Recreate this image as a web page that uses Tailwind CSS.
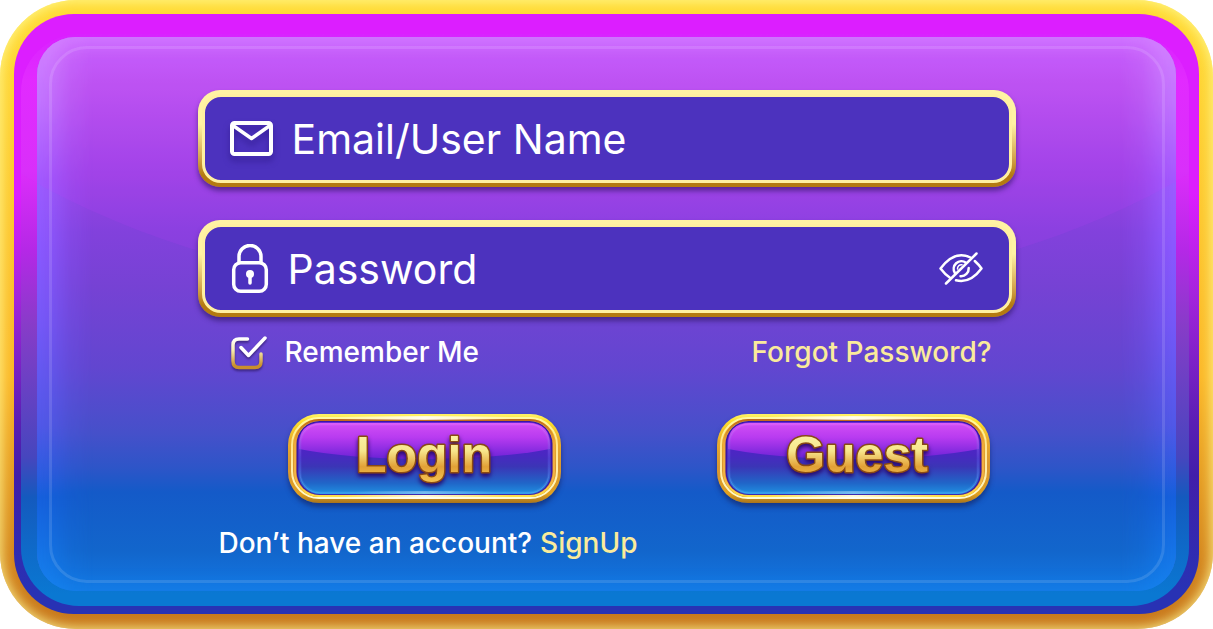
<!DOCTYPE html>
<html lang="en">
<head>
<meta charset="utf-8">
<meta name="viewport" content="width=device-width, initial-scale=1">
<title>Login</title>
<script src="https://cdn.jsdelivr.net/npm/@tailwindcss/browser@4"></script>
</head>
<body class="bg-white font-['Inter',sans-serif] text-white">

<!-- Shared gradients -->
<svg width="0" height="0" class="absolute" aria-hidden="true">
  <defs>
    <linearGradient id="gold" x1="0" y1="0" x2="0" y2="1">
      <stop offset="0" stop-color="#fff36a"/><stop offset=".08" stop-color="#fde02c"/><stop offset=".3" stop-color="#e9ac2c"/><stop offset=".6" stop-color="#d9962f"/><stop offset=".9" stop-color="#e0a020"/><stop offset="1" stop-color="#a9741c"/>
    </linearGradient>
    <linearGradient id="goldLine" x1="0" y1="0" x2="0" y2="1">
      <stop offset="0" stop-color="#fff9a0"/><stop offset=".35" stop-color="#ffe48c"/><stop offset=".75" stop-color="#fff0b0"/><stop offset="1" stop-color="#fffbd0"/>
    </linearGradient>
    <linearGradient id="goldInner" x1="0" y1="0" x2="0" y2="1">
      <stop offset="0" stop-color="#c46a18"/><stop offset=".3" stop-color="#f0a93a"/><stop offset=".8" stop-color="#f3b545"/><stop offset="1" stop-color="#ffdf45"/>
    </linearGradient>
    <linearGradient id="face" x1="0" y1="0" x2="0" y2="1">
      <stop offset="0" stop-color="#5a1fd0"/><stop offset=".45" stop-color="#4a27c2"/><stop offset=".62" stop-color="#3b35b6"/><stop offset=".85" stop-color="#2066c8"/><stop offset="1" stop-color="#2090e2"/>
    </linearGradient>
    <linearGradient id="gloss" x1="0" y1="0" x2="0" y2="1">
      <stop offset="0" stop-color="#d24ff5"/><stop offset=".4" stop-color="#b83bf0"/><stop offset="1" stop-color="#6a22d6"/>
    </linearGradient>
    <linearGradient id="rim" x1="0" y1="0" x2="0" y2="1">
      <stop offset="0" stop-color="#e86cfa"/><stop offset=".5" stop-color="#5a50e0"/><stop offset="1" stop-color="#4cb0f4"/>
    </linearGradient>
    <linearGradient id="flare" x1="0" y1="0" x2="1" y2="0">
      <stop offset=".1" stop-color="#fff" stop-opacity="0"/><stop offset=".5" stop-color="#fff" stop-opacity=".8"/><stop offset=".9" stop-color="#fff" stop-opacity="0"/>
    </linearGradient>
    <linearGradient id="caption" gradientUnits="userSpaceOnUse" x1="0" y1="20" x2="0" y2="68">
      <stop offset="0" stop-color="#fbf3a4"/><stop offset=".35" stop-color="#f7e68c"/><stop offset=".68" stop-color="#e2a136"/><stop offset="1" stop-color="#f3c250"/>
    </linearGradient>
    <linearGradient id="tick" gradientUnits="userSpaceOnUse" x1="0" y1="0" x2="0" y2="34">
      <stop offset=".1" stop-color="#fff"/><stop offset=".45" stop-color="#f8ecb0"/><stop offset=".9" stop-color="#c98f2c"/>
    </linearGradient>
    <g id="plate">
      <rect width="273" height="89" rx="31" fill="url(#gold)"/>
      <rect x="4" y="4" width="265" height="80" rx="27" fill="none" stroke="url(#goldLine)" stroke-width="2"/>
      <rect x="7" y="6" width="259" height="76" rx="24" fill="none" stroke="url(#goldInner)" stroke-width="2"/>
      <rect x="8.500" y="7" width="256" height="74" rx="23" fill="#3a16a8"/>
      <rect x="10" y="8" width="253" height="72" rx="22" fill="url(#face)"/>
      <path d="M11 35V31Q11 9 33 9H240Q262 9 262 31V35Q210 45 136 45T11 35Z" fill="url(#gloss)"/>
      <rect x="12" y="10" width="249" height="69" rx="20" fill="none" stroke="url(#rim)" stroke-width="3" opacity=".25"/>
      <rect x="12" y="10" width="249" height="69" rx="20" fill="none" stroke="url(#rim)" stroke-width="1" opacity=".6"/>
      <rect x="30" y="2" width="213" height="4" fill="url(#flare)"/>
      <rect x="30" y="81" width="213" height="4" fill="url(#flare)"/>
      <rect x="50" y="77" width="173" height="3" fill="url(#flare)" opacity=".4"/>
    </g>
  </defs>
</svg>

<!-- Gold frame -->
<div class="min-h-screen grid rounded-[76px] p-[14px] pb-[15px] bg-linear-to-b from-[#ffdc37] via-[#fbb829] via-60% to-[#c6751b] shadow-[inset_0_0_12px_2px_#fffa96d0]">
  <!-- Violet band -->
  <div class="grid rounded-[60px] pt-[20px] pb-[8px] pl-[7px] pr-[10px] bg-[linear-gradient(to_bottom,#dc1eff_0%,#dc1eff_30%,#a324dc_47%,#5a1eb4_68%,#411eaa_77%,#2832b4_96%)]">
    <div class="relative grid overflow-hidden rounded-[58px] pt-[3px] pb-[15px] pl-[16px] pr-[13px] bg-[linear-gradient(to_bottom,#dc1eff_0%,#e628ff_8%,#dc2dfa_24%,#b428e6_38%,#873cc8_51%,#4646be_74%,#145abe_81%,#0a78d2_98%)]">
      <!-- Panel -->
      <main class="relative overflow-hidden rounded-[38px] pt-[53px] pb-[29px] px-6 bg-[linear-gradient(to_bottom,#c864ff_0px,#bb55f0_50px,#9c44e5_135px,#8241dc_195px,#7642d4_250px,#6246d0_330px,#4650ca_395px,#2e55c8_430px,#145ac8_455px,#1266cc_515px,#1378e4_100%)] shadow-[inset_0_14px_20px_-8px_#d486ff,inset_0_-10px_16px_-6px_#147de6]">
        <!-- Side glow, fading towards the middle -->
        <div class="pointer-events-none absolute inset-0 bg-[linear-gradient(to_bottom,#d68cff_0%,#c07cff_12%,#9c5cff_26%,#8a58ff_38%,#7458f8_52%,#5058e8_70%,#2a5ce0_79%,#145fdc_83%,#1482ee_100%)] [mask-image:linear-gradient(to_right,#000_0,#000c_14px,#0004_34px,transparent_56px,transparent_calc(100%-56px),#0004_calc(100%-34px),#000c_calc(100%-14px),#000_100%)]"></div>
        <form class="relative z-10 mx-auto w-full max-w-[818px]" onsubmit="return false">

          <div class="rounded-[22px] p-1 bg-[linear-gradient(to_bottom,#fff3a3_35%,#d4a44c_70%,#b47a10_88%)] shadow-[0_4px_5px_#28145a90]">
            <div class="flex h-[89px] items-center gap-[19px] rounded-[19px] border-3 border-[#fff0a0] bg-[#4c32be] pl-[25px] pr-[26px]">
              <label for="user" class="shrink-0">
                <svg role="img" aria-label="Email/User Name" class="h-[35px] w-[43px] overflow-visible drop-shadow-[0_5px_3px_#28148090]" viewBox="0 0 43 35" fill="none" stroke="#fff" stroke-width="4" stroke-linejoin="round"><rect x="2" y="2" width="39" height="31" rx="2.500"/><path d="M3 4.500 21.500 17.500 40 4.500" stroke-width="3.500"/></svg>
              </label>
              <input id="user" type="text" placeholder="Email/User Name" class="h-full w-full min-w-0 bg-transparent text-[41px] outline-none placeholder:text-white">
            </div>
          </div>

          <div class="mt-[33px] rounded-[22px] p-1 bg-[linear-gradient(to_bottom,#fff3a3_35%,#d4a44c_70%,#b47a10_88%)] shadow-[0_4px_5px_#28145a90]">
            <div class="flex h-[89px] items-center gap-[18px] rounded-[19px] border-3 border-[#fff0a0] bg-[#4c32be] pl-[25px] pr-[26px]">
              <label for="pass" class="shrink-0">
                <svg role="img" aria-label="Password" class="h-[50px] w-[40px]" viewBox="0 0 40 50" fill="none" stroke="#fff" stroke-width="3.500"><rect x="3.700" y="18.700" width="32.600" height="28.600" rx="7"/><path d="M9 18V12.500a11 11 0 0 1 22 0V18"/><circle cx="20" cy="30" r="4" fill="#fff" stroke="none"/><path d="M20 31v8" stroke-linecap="round"/></svg>
              </label>
              <input id="pass" type="password" placeholder="Password" class="h-full w-full min-w-0 bg-transparent text-[41px] outline-none placeholder:text-white">
              <button type="button" aria-label="Show password" class="shrink-0">
                <svg class="h-[33px] w-[44px]" viewBox="0 0 44 33" fill="none" stroke="#fff" stroke-width="2.500" stroke-linecap="round" stroke-linejoin="round" aria-hidden="true"><path d="M31.500 5.500C22 .8 11.500 3.200 1.500 16.500 4.500 20.500 7.800 23.600 11 25.700M17 28.300C26.500 30.800 35 26.500 42.500 16.500 40.500 13.500 38 11 35.800 9"/><path d="M27 10.700A7.700 7.700 0 0 0 15.900 21M21.500 24.200A7.700 7.700 0 0 0 29.700 16"/><path d="M23 12.700A4 4 0 0 0 18.500 17" stroke-width="1.500"/><path d="M7 31.500 37.500 1.500"/></svg>
              </button>
            </div>
          </div>

          <div class="mt-4 flex h-[38px] items-center justify-between pl-[33px] pr-6 text-[28px] font-medium">
            <label class="flex items-center gap-[18px]">
              <span class="grid h-[34px] w-[36px]">
                <input type="checkbox" checked class="col-start-1 row-start-1 appearance-none">
                <svg class="pointer-events-none col-start-1 row-start-1 overflow-visible drop-shadow-[0_2px_1px_#28145aa0]" viewBox="0 0 36 34" fill="none" stroke="url(#tick)" stroke-width="3.500" stroke-linecap="round" stroke-linejoin="round" aria-hidden="true"><path d="M16.500 4H8Q2 4 2 10V26Q2 32.500 8 32.500H24Q30 32.500 30 26.500V19"/><path d="M10 12.500 17.500 20.500 34 3" stroke="#fff"/></svg>
              </span>
              Remember Me
            </label>
            <a href="#" class="text-[#faeb9b]">Forgot Password?</a>
          </div>

          <div class="mt-[43px] flex justify-between pl-[90px] pr-[26px]">
            <button type="submit" class="rounded-[31px] shadow-[0_4px_5px_#14286eb0]">
              <svg class="h-[89px] w-[273px]" viewBox="0 0 273 89"><use href="#plate"/><text x="136" y="58" text-anchor="middle" font-family="Liberation Sans, sans-serif" font-weight="700" font-size="50" fill="url(#caption)" stroke="#8a4a14" stroke-width="3" stroke-linejoin="round" paint-order="stroke" class="drop-shadow-[0_3px_2px_#280a6e]">Login</text></svg>
            </button>
            <button type="button" class="rounded-[31px] shadow-[0_4px_5px_#14286eb0]">
              <svg class="h-[89px] w-[273px]" viewBox="0 0 273 89"><use href="#plate"/><text x="140" y="58" text-anchor="middle" font-family="Liberation Sans, sans-serif" font-weight="700" font-size="50" fill="url(#caption)" stroke="#8a4a14" stroke-width="3" stroke-linejoin="round" paint-order="stroke" class="drop-shadow-[0_3px_2px_#280a6e]">Guest</text></svg>
            </button>
          </div>

          <p class="mt-[21px] flex h-[38px] items-center gap-2 pl-[21px] text-[28px] font-medium">Don’t have an account? <a href="#" class="text-[#faeb9b]">SignUp</a></p>
        </form>
      </main>
      <!-- Curved highlight and hairline over the panel -->
      <svg class="pointer-events-none absolute inset-0 h-full w-full" viewBox="0 0 1168 572" preserveAspectRatio="none" aria-hidden="true"><path d="M0 0H1168V140C1000 240 780 271 584 271S168 240 0 140Z" fill="#c83cff" opacity=".13"/></svg>
      <div class="pointer-events-none absolute top-[12px] right-[24px] bottom-[23px] left-[28px] rounded-[38px] border-3 border-white/12"></div>
    </div>
  </div>
</div>
</body>
</html>
